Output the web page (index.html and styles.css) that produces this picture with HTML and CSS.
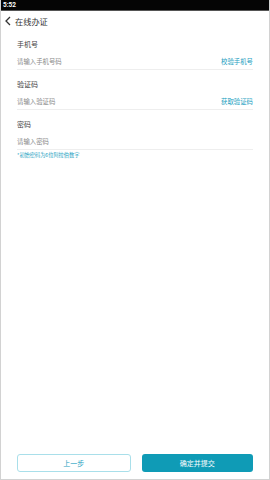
FILE: index.html
```html
<!DOCTYPE html>
<html lang="zh-CN">
<head>
    <meta charset="UTF-8">
    <meta name="viewport" content="width=device-width, initial-scale=1.0">
    <title>在线办证</title>
    <link rel="stylesheet" href="styles.css">
</head>
<body>
    <div class="screen">
        <div class="status-bar">5:52</div>

        <div class="header">
            <svg class="back" width="6" height="10" viewBox="0 0 6 10">
                <polyline points="5,1 1,5 5,9" fill="none" stroke="#333" stroke-width="1.3"/>
            </svg>
            <span class="title">在线办证</span>
        </div>

        <div class="form">
            <div class="field">
                <div class="label">手机号</div>
                <div class="row">
                    <span class="placeholder">请输入手机号码</span>
                    <span class="action">校验手机号</span>
                </div>
            </div>
            <div class="field">
                <div class="label">验证码</div>
                <div class="row">
                    <span class="placeholder">请输入验证码</span>
                    <span class="action">获取验证码</span>
                </div>
            </div>
            <div class="field">
                <div class="label">密码</div>
                <div class="row">
                    <span class="placeholder">请输入密码</span>
                </div>
            </div>
            <div class="hint">*初始密码为6位阿拉伯数字</div>
        </div>

        <div class="buttons">
            <div class="btn btn-outline">上一步</div>
            <div class="btn btn-primary">确定并提交</div>
        </div>
    </div>
</body>
</html>
```

FILE: styles.css
```css
html, body {
    margin: 0;
    padding: 0;
}
body {
    font-family: "Noto Sans CJK SC", "Noto Sans", sans-serif;
    color: #333;
    background: #fff;
}
.screen {
    box-sizing: border-box;
    width: 270px;
    height: 480px;
    display: flex;
    flex-direction: column;
    border: 1px solid #d2d2d2;
    border-top: none;
}
.status-bar {
    height: 10px;
    background: #050505;
    border-bottom: 1px solid #555;
    color: #fff;
    font-family: "Roboto", sans-serif;
    font-weight: bold;
    font-size: 6.5px;
    line-height: 10px;
    padding-left: 2px;
}
.header {
    box-sizing: border-box;
    height: 19px;
    display: flex;
    align-items: center;
    padding-left: 4px;
    padding-top: 1px;
}
.back {
    display: block;
    margin-right: 4px;
}
.title {
    font-size: 8.2px;
    color: #333;
}
.form {
    padding: 0 16px;
}
.field {
    padding-top: 8px;
    padding-bottom: 2px;
    border-bottom: 1px solid #eee;
}
.label {
    font-size: 7px;
    line-height: 12px;
    color: #444;
}
.row {
    display: flex;
    justify-content: space-between;
    align-items: center;
    margin-top: 5px;
    height: 12px;
    font-size: 6.4px;
}
.placeholder {
    color: #8a8a8a;
}
.action {
    color: #1a9ec0;
}
.hint {
    font-size: 5.2px;
    line-height: 8px;
    color: #1a9ec0;
    margin-top: 1px;
}
.buttons {
    margin-top: auto;
    display: flex;
    gap: 11px;
    padding: 0 16px 7px;
}
.btn {
    flex: 1;
    box-sizing: border-box;
    height: 18px;
    border-radius: 3px;
    font-size: 7px;
    display: flex;
    align-items: center;
    justify-content: center;
}
.btn-outline {
    border: 1px solid #a9dfea;
    color: #1a9ec0;
}
.btn-primary {
    background: #0f9bb6;
    color: #fff;
}
```
